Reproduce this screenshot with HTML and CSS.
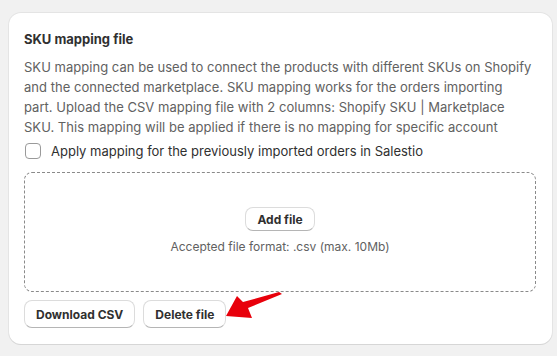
FILE: index.html
```html
<!DOCTYPE html>
<html lang="en">

<head>
    <meta charset="UTF-8">
    <meta name="viewport" content="width=device-width, initial-scale=1.0">
    <title>SKU mapping file</title>
    <link rel="stylesheet" href="styles.css">
</head>

<body>
    <div class="page">
        <section class="card">
            <h2 class="card-title">SKU mapping file</h2>
            <p class="card-text">SKU mapping can be used to connect the products with different SKUs on Shopify<br>
                and the connected marketplace. SKU mapping works for the orders importing<br>
                part. Upload the CSV mapping file with 2 columns: Shopify SKU | Marketplace<br>
                SKU. This mapping will be applied if there is no mapping for specific account</p>

            <label class="check-row">
                <span class="checkbox"></span>
                <span>Apply mapping for the previously imported orders in Salestio</span>
            </label>

            <div class="dropzone">
                <button class="btn btn-small">Add file</button>
                <span class="dropzone-hint">Accepted file format: .csv (max. 10Mb)</span>
            </div>

            <div class="actions">
                <button class="btn">Download CSV</button>
                <button class="btn">Delete file</button>
            </div>

            <!-- annotation arrow pointing at the delete button -->
            <svg class="arrow" width="60" height="32" viewBox="0 0 60 32">
                <polygon points="54,2 57,4 23,18 27,28 1,26 12,6 18,12" fill="#e8000b"/>
            </svg>
        </section>
    </div>
</body>

</html>
```

FILE: styles.css
```css
* {
    margin: 0;
    padding: 0;
    box-sizing: border-box;
}

body {
    font-family: 'Inter', 'Liberation Sans', sans-serif;
    background-color: #f1f1f1;
    color: #303030;
    font-size: 13px;
    line-height: 20px;
}

.page {
    padding: 13px 5px 12px 9px;
}

.card {
    position: relative;
    background-color: #ffffff;
    border-radius: 12px;
    box-shadow: 0 1px 0 0 #d6d6d6, 0 0 0 1px rgba(0, 0, 0, 0.05);
    padding: 16px 15px 16px 15px;
    display: flex;
    flex-direction: column;
}

.card-title {
    font-size: 13px;
    font-weight: 650;
    line-height: 20px;
    color: #303030;
}

.card-text {
    margin-top: 8px;
    color: #616161;
    font-size: 13px;
    line-height: 20px;
    letter-spacing: 0.03px;
    white-space: nowrap;
}

.check-row {
    display: flex;
    align-items: center;
    gap: 10px;
    margin-top: 4px;
    padding-left: 1px;
    color: #303030;
}

.checkbox {
    width: 16px;
    height: 16px;
    border: 1px solid #9a9a9a;
    border-radius: 4px;
    background-color: #ffffff;
}

.dropzone {
    margin-top: 11px;
    height: 120px;
    border: 1px dashed #8a8a8a;
    border-radius: 8px;
    display: flex;
    flex-direction: column;
    align-items: center;
    justify-content: center;
    gap: 6px;
    margin-right: 1px;
}

.dropzone-hint {
    color: #616161;
    font-size: 12px;
}

.btn {
    font-family: inherit;
    font-size: 12px;
    font-weight: 650;
    color: #303030;
    background-color: #ffffff;
    border: 1px solid #dcdcdc;
    border-bottom-color: #b5b5b5;
    border-radius: 8px;
    height: 28px;
    padding: 0 11px;
    cursor: pointer;
}

.btn-small {
    height: 24px;
    padding: 0 11px;
}

.actions {
    display: flex;
    gap: 8px;
    margin-top: 8px;
}

.arrow {
    position: absolute;
    left: 216px;
    top: 277px;
}
```
